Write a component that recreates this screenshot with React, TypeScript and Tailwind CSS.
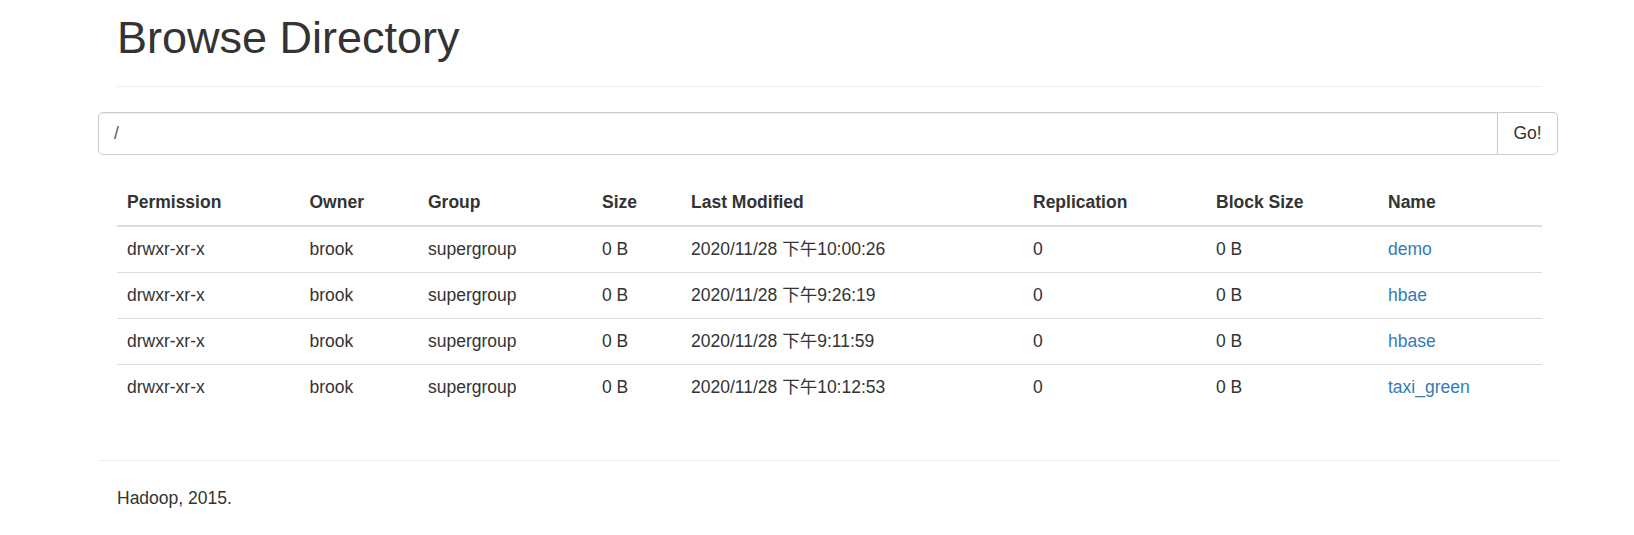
import React from "react";

const rows = [
  { perm: "drwxr-xr-x", owner: "brook", group: "supergroup", size: "0 B", mod: "2020/11/28 下午10:00:26", rep: "0", bs: "0 B", name: "demo" },
  { perm: "drwxr-xr-x", owner: "brook", group: "supergroup", size: "0 B", mod: "2020/11/28 下午9:26:19", rep: "0", bs: "0 B", name: "hbae" },
  { perm: "drwxr-xr-x", owner: "brook", group: "supergroup", size: "0 B", mod: "2020/11/28 下午9:11:59", rep: "0", bs: "0 B", name: "hbase" },
  { perm: "drwxr-xr-x", owner: "brook", group: "supergroup", size: "0 B", mod: "2020/11/28 下午10:12:53", rep: "0", bs: "0 B", name: "taxi_green" },
];

const headers = ["Permission", "Owner", "Group", "Size", "Last Modified", "Replication", "Block Size", "Name"];
const widths = [182.5, 118.5, 174, 89, 342, 183, 172, 164];

export default function App() {
  return (
    <div
      className="min-h-[535px] w-[1634px] bg-white text-[#333] text-[17.5px] leading-[25px]"
      style={{ fontFamily: '"Liberation Sans", Arial, "Noto Sans CJK SC", sans-serif' }}
    >
      <div className="ml-[117px] w-[1425px] pt-[13px]">
        <div className="border-b border-[#eee] pb-[11.25px] mb-[25px]">
          <h1 className="text-[45px] leading-[49.5px] font-normal mb-[12.5px] text-[#333]">Browse Directory</h1>
        </div>
        <div className="-ml-[19px] w-[1460px] flex h-[42.5px]">
          <div className="flex-1 border border-[#ccc] rounded-l-[5px] px-[15px] flex items-center text-[#555] shadow-[inset_0_1px_1px_rgba(0,0,0,0.075)]">
            /
          </div>
          <button className="w-[60px] border border-l-0 border-[#ccc] rounded-r-[5px] bg-white text-[#333] text-[17.5px]">
            Go!
          </button>
        </div>
        <div className="h-[25px]" />
        <table className="w-[1425px] table-fixed border-collapse mb-[25px]">
          <colgroup>
            {widths.map((w, i) => (
              <col key={i} style={{ width: w }} />
            ))}
          </colgroup>
          <thead>
            <tr>
              {headers.map((h) => (
                <th key={h} className="text-left font-bold p-[10px] border-b-2 border-[#ddd] align-bottom">
                  {h}
                </th>
              ))}
            </tr>
          </thead>
          <tbody>
            {rows.map((r) => (
              <tr key={r.name}>
                <td className="p-[10px] border-t border-[#ddd]">{r.perm}</td>
                <td className="p-[10px] border-t border-[#ddd]">{r.owner}</td>
                <td className="p-[10px] border-t border-[#ddd]">{r.group}</td>
                <td className="p-[10px] border-t border-[#ddd]">{r.size}</td>
                <td className="p-[10px] border-t border-[#ddd]">{r.mod}</td>
                <td className="p-[10px] border-t border-[#ddd]">{r.rep}</td>
                <td className="p-[10px] border-t border-[#ddd]">{r.bs}</td>
                <td className="p-[10px] border-t border-[#ddd]">
                  <a className="text-[#337ab7]" href="#">{r.name}</a>
                </td>
              </tr>
            ))}
          </tbody>
        </table>
        <div className="-ml-[19px] w-[1462px] flow-root">
          <hr className="border-0 border-t border-[#eee] mt-[25px] mb-[25px]" />
          <p className="px-[19px]">Hadoop, 2015.</p>
        </div>
      </div>
    </div>
  );
}
